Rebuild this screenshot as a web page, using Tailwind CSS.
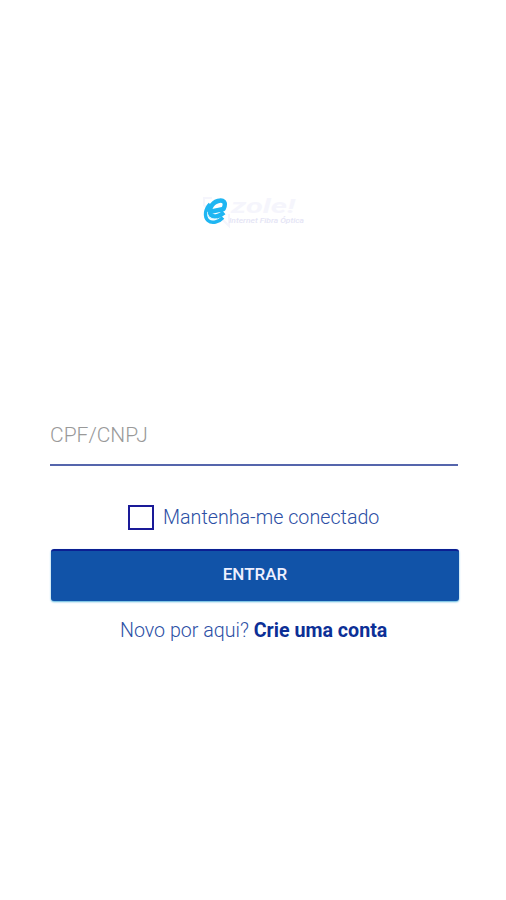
<!DOCTYPE html>
<html lang="pt-BR">
  <head>
    <meta charset="UTF-8" />
    <meta name="viewport" content="width=device-width, initial-scale=1.0" />
    <title>Entrar</title>
    <script src="https://cdn.jsdelivr.net/npm/@tailwindcss/browser@4"></script>
  </head>
  <body class="bg-white h-screen overflow-hidden font-['Roboto',sans-serif]">
    <main class="flex flex-col pl-[50px] pr-[47px] pt-[194px]">
      <!-- Logo -->
      <svg class="ml-[152px] h-[34px] w-[104px]" viewBox="0 0 104 34">
        <path d="M1 4h9M2 4v7l4 4M20 25l7 7V20" fill="none" stroke="#f5f5fc" stroke-width="2" />
        <path d="M9.500 17.500L21.500 15C25 8 21 5.500 16 7C9 9 6 17 9 21C12 24 18 22 22 18.500" fill="none" stroke="#1fb6f2" stroke-width="4.500" stroke-linejoin="round" />
        <path d="M8 10C3 15 2 23 6 26.500C10 30 17 28 21 23.500" fill="none" stroke="#1fb6f2" stroke-width="3.500" />
        <path d="M5.500 18C5 23.500 9 26 15 24.500" fill="none" stroke="#c5f1ff" stroke-width="0.800" />
        <text x="29" y="19" font-size="20" font-weight="700" font-style="italic" fill="#f5f5fc" textLength="64" lengthAdjust="spacingAndGlyphs">zole!</text>
        <text x="27" y="29" font-size="7" font-weight="500" font-style="italic" fill="#e4e4f5" textLength="75" lengthAdjust="spacingAndGlyphs">Internet Fibra Óptica</text>
      </svg>

      <form class="mt-[186px] flex flex-col">
        <input
          type="text"
          placeholder="CPF/CNPJ"
          class="h-[52px] w-[408px] border-b-2 border-[#5565ac] pb-[8px] text-[21px] font-light text-[#888] placeholder:text-[#999] focus:outline-none"
        />
        <label class="mt-[38px] ml-[78px] flex h-[26px] items-center gap-[9px]">
          <span class="h-[25px] w-[26px] border-2 border-[#1a1a98]"></span>
          <span class="pt-[2px] text-[19.7px] font-light whitespace-nowrap text-[#2c4fa5]">Mantenha-me conectado</span>
        </label>
        <button
          type="button"
          class="mt-[19px] ml-px h-[52px] w-[408px] rounded-[3px] border-t-2 border-[#0b1f92] bg-[#1153a8] pb-[2px] text-[17px] font-medium text-[#eef0ff] shadow-[0_1px_2px_#58b4dc]"
        >
          ENTRAR
        </button>
      </form>
      <p class="mt-[15px] ml-[70px] text-[19.65px] leading-[30px] whitespace-nowrap text-[#2c4fa5]">
        <span class="font-light">Novo por aqui?</span>
        <a href="#" class="font-bold text-[#0c2f96]">Crie uma conta</a>
      </p>
    </main>
  </body>
</html>
